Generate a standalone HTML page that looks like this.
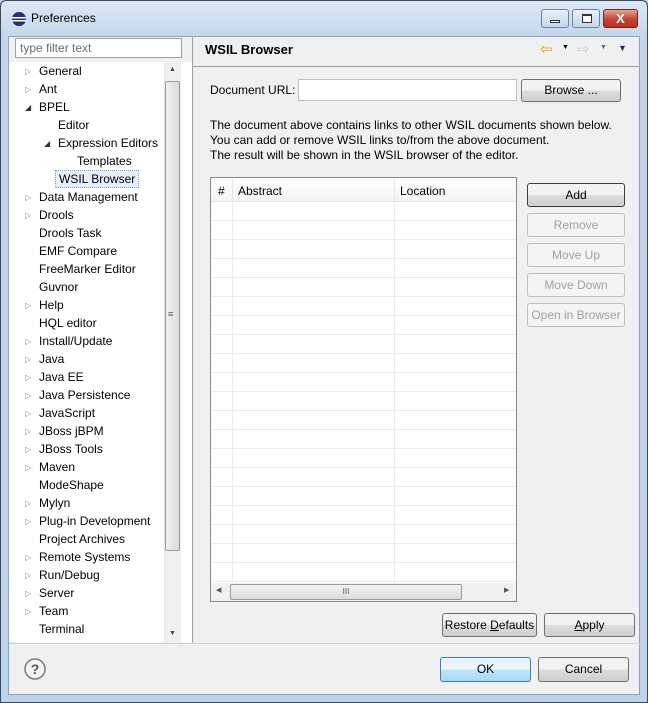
<!DOCTYPE html>
<html><head><style>
*{box-sizing:border-box;margin:0;padding:0}
body{width:648px;height:703px;background:#b9d1ea;font-family:"Liberation Sans",sans-serif;font-size:12px;color:#000;position:relative;overflow:hidden}
.frame{position:absolute;left:0;top:0;width:648px;height:703px;border:1px solid #3a4a5a;border-radius:6px 6px 0 0;background:linear-gradient(#dbe8f5,#c3d6ea 36px,#bcd2e8)}
.abs{position:absolute}
.client{position:absolute;left:8px;top:36px;width:632px;height:659px;background:#f0f0f0;border:1px solid #8ea4bc}
.btn{position:absolute;border:1px solid #707070;border-radius:3px;background:linear-gradient(#f2f2f2 50%,#dddddd 50%,#cfcfcf);text-align:center;font-size:12px}
.dis{border-color:#c0c0c0;color:#a0a0a0;background:#f4f4f4}
.tree div{position:absolute;height:18px;line-height:18px;white-space:nowrap}
.tri{position:absolute;color:#888;font-size:8px}
</style></head><body>
<div class="frame"></div>
<svg class="abs" style="left:11px;top:11px" width="16" height="16"><circle cx="8" cy="8" r="7" fill="#2c2c6e"/><rect x="1" y="6" width="14" height="1.5" fill="#fff"/><rect x="1" y="9" width="14" height="1.5" fill="#fff"/></svg>
<div class="abs" style="left:31px;top:11px;font-size:12px">Preferences</div>
<div class="abs" style="left:541px;top:9px;width:28px;height:19px;border:1px solid #6d819b;border-radius:3px;background:linear-gradient(#e8f0f8,#c4d6ea)"><div style="position:absolute;left:8px;top:10px;width:10px;height:3px;border:1px solid #333;background:#fff"></div></div>
<div class="abs" style="left:572px;top:9px;width:28px;height:19px;border:1px solid #6d819b;border-radius:3px;background:linear-gradient(#e8f0f8,#c4d6ea)"><div style="position:absolute;left:9px;top:4px;width:10px;height:9px;border:1px solid #333;border-top-width:2px;background:#fff"></div></div>
<div class="abs" style="left:603px;top:9px;width:35px;height:19px;border:1px solid #6b2a20;border-radius:3px;background:linear-gradient(#e8a595,#c8473a 50%,#b53020);color:#fff;font-weight:bold;text-align:center;line-height:17px;font-size:13px">X</div>
<div class="client">
<div class="abs" style="left:6px;top:1px;width:167px;height:20px;border:1px solid #a0a0a0;background:#fff;color:#6d6d6d;padding:2px 4px">type filter text</div>
<div class="abs" style="left:0;top:25px;width:183px;height:580px;background:#fff"></div>
<div class="abs" style="left:155px;top:25px;width:17px;height:580px;background:#f0f0f0;border-left:1px solid #e8e8e8"></div>
<div class="abs" style="left:156px;top:44px;width:15px;height:470px;border:1px solid #9a9a9a;border-radius:2px;background:linear-gradient(90deg,#f0f0f0,#dcdcdc)"></div>
<div class="abs" style="left:160px;top:29px;font-size:7px;color:#444">▲</div>
<div class="abs" style="left:160px;top:593px;font-size:7px;color:#444">▼</div>
<div class="abs" style="left:159px;top:272px;font-size:9px;color:#555">≡</div>
<div class="tree" style="position:absolute;left:0;top:0">
<div style="left:30px;top:25px">General</div><span class="tri" style="left:16px;top:30px">▷</span>
<div style="left:30px;top:43px">Ant</div><span class="tri" style="left:16px;top:48px">▷</span>
<div style="left:30px;top:61px">BPEL</div><span class="tri" style="left:16px;top:66px;color:#333">◢</span>
<div style="left:49px;top:79px">Editor</div>
<div style="left:49px;top:97px">Expression Editors</div><span class="tri" style="left:35px;top:102px;color:#333">◢</span>
<div style="left:68px;top:115px">Templates</div>
<div style="left:46px;top:133px;border:1px dotted #7da2ce;background:#e5f0fb;padding:0 3px;line-height:16px;height:18px">WSIL Browser</div>
<div style="left:30px;top:151px">Data Management</div><span class="tri" style="left:16px;top:156px">▷</span>
<div style="left:30px;top:169px">Drools</div><span class="tri" style="left:16px;top:174px">▷</span>
<div style="left:30px;top:187px">Drools Task</div>
<div style="left:30px;top:205px">EMF Compare</div>
<div style="left:30px;top:223px">FreeMarker Editor</div>
<div style="left:30px;top:241px">Guvnor</div>
<div style="left:30px;top:259px">Help</div><span class="tri" style="left:16px;top:264px">▷</span>
<div style="left:30px;top:277px">HQL editor</div>
<div style="left:30px;top:295px">Install/Update</div><span class="tri" style="left:16px;top:300px">▷</span>
<div style="left:30px;top:313px">Java</div><span class="tri" style="left:16px;top:318px">▷</span>
<div style="left:30px;top:331px">Java EE</div><span class="tri" style="left:16px;top:336px">▷</span>
<div style="left:30px;top:349px">Java Persistence</div><span class="tri" style="left:16px;top:354px">▷</span>
<div style="left:30px;top:367px">JavaScript</div><span class="tri" style="left:16px;top:372px">▷</span>
<div style="left:30px;top:385px">JBoss jBPM</div><span class="tri" style="left:16px;top:390px">▷</span>
<div style="left:30px;top:403px">JBoss Tools</div><span class="tri" style="left:16px;top:408px">▷</span>
<div style="left:30px;top:421px">Maven</div><span class="tri" style="left:16px;top:426px">▷</span>
<div style="left:30px;top:439px">ModeShape</div>
<div style="left:30px;top:457px">Mylyn</div><span class="tri" style="left:16px;top:462px">▷</span>
<div style="left:30px;top:475px">Plug-in Development</div><span class="tri" style="left:16px;top:480px">▷</span>
<div style="left:30px;top:493px">Project Archives</div>
<div style="left:30px;top:511px">Remote Systems</div><span class="tri" style="left:16px;top:516px">▷</span>
<div style="left:30px;top:529px">Run/Debug</div><span class="tri" style="left:16px;top:534px">▷</span>
<div style="left:30px;top:547px">Server</div><span class="tri" style="left:16px;top:552px">▷</span>
<div style="left:30px;top:565px">Team</div><span class="tri" style="left:16px;top:570px">▷</span>
<div style="left:30px;top:583px">Terminal</div>
</div>
<div class="abs" style="left:183px;top:0;width:1px;height:606px;background:#a0a0a0"></div>
<div class="abs" style="left:196px;top:5px;font-weight:bold;font-size:13px">WSIL Browser</div>
<div class="abs" style="left:531px;top:3px;color:#e0a800;font-size:15px">⇦</div>
<div class="abs" style="left:553px;top:7px;font-size:7px">▼</div>
<div class="abs" style="left:568px;top:3px;color:#ccc;font-size:15px">⇨</div>
<div class="abs" style="left:591px;top:7px;font-size:7px;color:#666">▼</div>
<div class="abs" style="left:609px;top:6px;font-size:9px;color:#2a2a6a">▼</div>
<div class="abs" style="left:184px;top:29px;width:447px;height:1px;background:#a0a0a0"></div>
<div class="abs" style="left:201px;top:46px">Document URL:</div>
<div class="abs" style="left:289px;top:42px;width:219px;height:22px;border:1px solid #c0c0c0;background:#fff"></div>
<div class="btn" style="left:512px;top:42px;width:100px;height:23px;line-height:21px">Browse ...</div>
<div class="abs" style="left:201px;top:81px;line-height:15px">The document above contains links to other WSIL documents shown below.<br>You can add or remove WSIL links to/from the above document.<br>The result will be shown in the WSIL browser of the editor.</div>
<div class="abs" style="left:201px;top:140px;width:307px;height:425px;border:1px solid #828790;background:#fff;overflow:hidden">
<div style="position:absolute;left:0;top:0;width:305px;height:24px;background:linear-gradient(#fff,#f3f4f6);border-bottom:1px solid #e5e5e5"></div>
<div style="position:absolute;left:7px;top:6px">#</div>
<div style="position:absolute;left:27px;top:6px">Abstract</div>
<div style="position:absolute;left:189px;top:6px">Location</div>
<div style="position:absolute;left:21px;top:0;width:1px;height:405px;background:#e8e8e8"></div>
<div style="position:absolute;left:183px;top:0;width:1px;height:405px;background:#e8e8e8"></div>
<div style="position:absolute;left:0;top:24px;width:305px;height:381px;background:repeating-linear-gradient(#fff 0,#fff 18px,#ececec 18px,#ececec 19px)"></div>
<div style="position:absolute;left:21px;top:24px;width:1px;height:381px;background:#ececec"></div>
<div style="position:absolute;left:183px;top:24px;width:1px;height:381px;background:#ececec"></div>
<div style="position:absolute;left:0;top:405px;width:305px;height:18px;background:#f0f0f0"></div>
<div style="position:absolute;left:5px;top:408px;font-size:7px;color:#555">◀</div>
<div style="position:absolute;left:293px;top:408px;font-size:7px;color:#555">▶</div>
<div style="position:absolute;left:19px;top:406px;width:232px;height:16px;border:1px solid #9a9a9a;border-radius:2px;background:linear-gradient(#f4f4f4,#dcdcdc);text-align:center;font-size:8px;line-height:14px;color:#555">III</div>
</div>
<div class="btn" style="left:518px;top:146px;width:98px;height:24px;line-height:22px;border-color:#3c3c3c">Add</div>
<div class="btn dis" style="left:518px;top:176px;width:98px;height:24px;line-height:22px">Remove</div>
<div class="btn dis" style="left:518px;top:206px;width:98px;height:24px;line-height:22px">Move Up</div>
<div class="btn dis" style="left:518px;top:236px;width:98px;height:24px;line-height:22px">Move Down</div>
<div class="btn dis" style="left:518px;top:266px;width:98px;height:24px;line-height:22px">Open in Browser</div>
<div class="btn" style="left:433px;top:576px;width:95px;height:24px;line-height:22px">Restore <u>D</u>efaults</div>
<div class="btn" style="left:535px;top:576px;width:91px;height:24px;line-height:22px"><u>A</u>pply</div>
<div class="abs" style="left:0;top:606px;width:631px;height:1px;background:#d0d0d0"></div>
<svg class="abs" style="left:15px;top:621px" width="22" height="22"><circle cx="11" cy="11" r="10" fill="#f4f4f4" stroke="#7a7a7a" stroke-width="1.5"/><text x="11" y="16" font-family="Liberation Sans" font-weight="bold" font-size="14" text-anchor="middle" fill="#555">?</text></svg>
<div class="btn" style="left:431px;top:620px;width:91px;height:25px;line-height:23px;border-color:#3c7fb1;background:linear-gradient(#eaf6fd 50%,#bee6fd 50%,#a7d9f5)">OK</div>
<div class="btn" style="left:529px;top:620px;width:91px;height:25px;line-height:23px">Cancel</div>
</div>
</body></html>
